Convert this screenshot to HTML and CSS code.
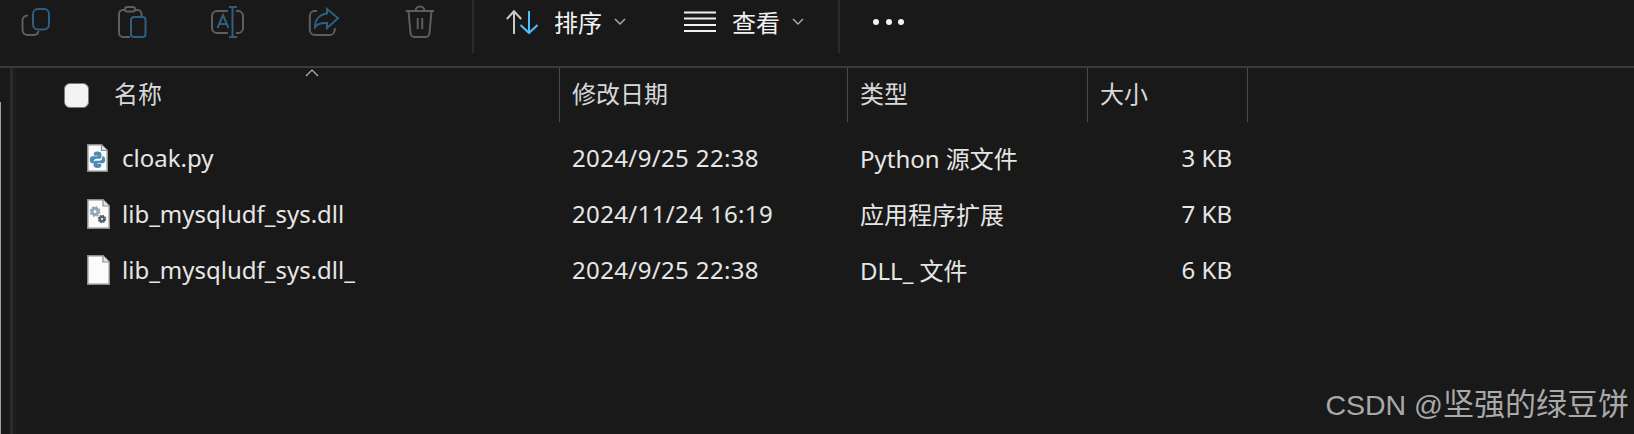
FILE: index.html
```html
<!DOCTYPE html>
<html lang="zh-CN">
<head>
    <meta charset="UTF-8">
    <title>文件资源管理器</title>
    <link rel="stylesheet" href="styles.css">
</head>
<body>
    <div class="toolbar">
        <div class="tool-group">
            <svg class="tool-icon" viewBox="0 0 36 40">
                <path class="dim" d="M10 13.5 H9.5 A5 5 0 0 0 4.5 18.5 V28 A5 5 0 0 0 9.5 33 H16 A5 5 0 0 0 20.5 29"/>
                <rect class="blue" x="15" y="7" width="16" height="20.5" rx="5"/>
            </svg>
            <svg class="tool-icon" viewBox="0 0 36 40">
                <path class="dim" d="M11 8 H9 A4 4 0 0 0 5 12 V31 A4 4 0 0 0 9 35 H16 M21 8 H23.5 A4 4 0 0 1 27.5 12 V14"/>
                <rect class="dim" x="11" y="5" width="10" height="4.5" rx="2.2"/>
                <rect class="blue" x="17" y="15" width="14.5" height="20" rx="3"/>
            </svg>
            <svg class="tool-icon" viewBox="0 0 36 40">
                <path class="dim" d="M18 9 H7 A5 5 0 0 0 2 14 V26 A5 5 0 0 0 7 31 H18 M26 9 H28 A5 5 0 0 1 33 14 V26 A5 5 0 0 1 28 31 H26"/>
                <path class="blue" d="M22.5 5 V35 M19 5 H27 M19 35 H27 M7.5 26 L13 13 L18.5 26 M9.5 22 H16.5"/>
            </svg>
            <svg class="tool-icon" viewBox="0 0 36 40">
                <path class="dim" d="M11 9 H8.5 A5 5 0 0 0 3.8 14 V28 A5 5 0 0 0 8.5 33 H24 A5 5 0 0 0 28.7 28 V26"/>
                <path class="blue" d="M21 7 L32 16.3 L21 26 V21 C15 20.5 11.5 22 9 25 C9 17 14 12.5 21 11.5 Z"/>
            </svg>
            <svg class="tool-icon" viewBox="0 0 36 40">
                <path class="dim" d="M3.7 9 H32 M6.5 9 L8.5 31 A4 4 0 0 0 12.5 35 H23.5 A4 4 0 0 0 27.5 31 L29.5 9 M13.5 9 A4.5 4.5 0 0 1 22.5 9 M15.7 16 V27 M20.2 16 V27"/>
            </svg>
        </div>
        <div class="tool-sep"></div>
        <div class="menu-btn sort-btn">
            <svg class="menu-icon" viewBox="0 0 32 24">
                <path class="up" d="M8 24 V1 M0.8 9 L8 1.2 L15.2 9"/>
                <path class="down" d="M23 1 V23 M14.5 15 L23 23 L31.5 15"/>
            </svg>
            <span class="menu-label">排序</span>
            <svg class="chevron" viewBox="0 0 12 8"><path d="M1 1 L6 6 L11 1"/></svg>
        </div>
        <div class="menu-btn view-btn">
            <svg class="menu-icon" viewBox="0 0 32 24">
                <path class="lines" d="M0 2.5 H32 M0 8.5 H32 M0 15 H32 M0 21 H32"/>
            </svg>
            <span class="menu-label">查看</span>
            <svg class="chevron" viewBox="0 0 12 8"><path d="M1 1 L6 6 L11 1"/></svg>
        </div>
        <div class="tool-sep sep-right"></div>
        <div class="more"><i></i><i></i><i></i></div>
    </div>

    <div class="main">
        <div class="side-edge"></div>
        <div class="pane-sliver"></div>
        <svg class="sort-arrow" viewBox="0 0 14 8"><path d="M1 7 L7 1 L13 7"/></svg>

        <div class="columns head">
            <div class="cell name-head"><span class="checkbox"></span><span class="head-label">名称</span></div>
            <div class="cell"><span class="head-label">修改日期</span></div>
            <div class="cell"><span class="head-label">类型</span></div>
            <div class="cell"><span class="head-label">大小</span></div>
        </div>

        <div class="columns row">
            <div class="cell file-name">
                <span class="icon-slot">
                    <svg class="file-icon narrow" viewBox="0 0 21 28">
                        <path class="paper" d="M.75 .75 H14.5 L20.25 6.5 V27.25 H.75 Z"/>
                        <path class="fold" d="M14.5 .75 V6.5 H20.25"/>
                        <path class="py" d="M10.2 7.5 C7.5 7.5 6.8 8.6 6.8 10 V11.5 H10.6 V12.3 H5.5 C3.7 12.3 2.8 13.7 2.8 15.8 C2.8 17.9 3.7 19.3 5.3 19.3 H6.8 V17.3 C6.8 15.8 8 14.8 9.4 14.8 H12.3 C13.6 14.8 14.4 13.9 14.4 12.7 V10 C14.4 8.6 13.2 7.5 10.2 7.5 Z"/>
                        <path class="py" d="M10.8 24 C13.5 24 14.2 22.9 14.2 21.5 V20 H10.4 V19.2 H15.5 C17.3 19.2 18.2 17.8 18.2 15.7 C18.2 13.6 17.3 12.2 15.7 12.2 H15.2 V14.2 C15.2 15.7 14 16.7 12.6 16.7 H8.7 C7.4 16.7 6.6 17.6 6.6 18.8 V21.5 C6.6 22.9 7.8 24 10.8 24 Z"/>
                    </svg>
                </span>
                cloak.py
            </div>
            <div class="cell date">2024/9/25 22:38</div>
            <div class="cell">Python 源文件</div>
            <div class="cell size">3 KB</div>
        </div>

        <div class="columns row">
            <div class="cell file-name">
                <span class="icon-slot">
                    <svg class="file-icon" viewBox="0 0 23 30">
                        <path class="paper" d="M.75 .75 H16 L22.25 7 V29.25 H.75 Z"/>
                        <path class="fold" d="M16 .75 V7 H22.25"/>
                        <circle class="gear-big" cx="8" cy="12.5" r="3"/>
                        <circle class="gear-big-teeth" cx="8" cy="12.5" r="4.6"/>
                        <circle class="gear-small" cx="15" cy="20" r="2.3"/>
                        <circle class="gear-small-teeth" cx="15" cy="20" r="3.6"/>
                    </svg>
                </span>
                lib_mysqludf_sys.dll
            </div>
            <div class="cell date">2024/11/24 16:19</div>
            <div class="cell">应用程序扩展</div>
            <div class="cell size">7 KB</div>
        </div>

        <div class="columns row">
            <div class="cell file-name">
                <span class="icon-slot">
                    <svg class="file-icon" viewBox="0 0 23 30">
                        <path class="paper" d="M.75 .75 H16 L22.25 7 V29.25 H.75 Z"/>
                        <path class="fold" d="M16 .75 V7 H22.25"/>
                    </svg>
                </span>
                lib_mysqludf_sys.dll_
            </div>
            <div class="cell date">2024/9/25 22:38</div>
            <div class="cell">DLL_ 文件</div>
            <div class="cell size">6 KB</div>
        </div>
    </div>

    <div class="watermark"><span class="mark-latin">CSDN @</span>坚强的绿豆饼</div>
</body>
</html>
```

FILE: styles.css
```css
* {
    margin: 0;
    padding: 0;
    box-sizing: border-box;
}

html, body {
    height: 100%;
    overflow: hidden;
}

body {
    position: relative;
    background: #191919;
    color: #e6e6e6;
    font-family: 'Noto Sans', 'Noto Sans CJK SC', sans-serif;
    font-size: 24px;
}

/* toolbar */
.toolbar {
    display: flex;
    height: 68px;
    border-bottom: 2px solid #3a3a3a;
}

.tool-group {
    display: flex;
    gap: 60px;
    width: 472px;
    padding: 2px 0 0 18px;
}

.tool-icon {
    width: 36px;
    height: 40px;
    fill: none;
    stroke-width: 2;
}

.dim { fill: none; stroke: #5e5e5e; }
.blue { fill: none; stroke: #2e5f7f; }

.tool-sep {
    width: 2px;
    height: 53px;
    background: #2c2c2c;
}

.menu-btn {
    display: flex;
    align-items: center;
    height: 44px;
    color: #f2f2f2;
}

.menu-label {
    margin-bottom: 2px;
}

.sort-btn { margin-left: 32px; }
.view-btn { margin-left: 58px; }

.menu-icon {
    width: 32px;
    height: 24px;
    margin-right: 16px;
    fill: none;
    stroke-width: 2;
}

.up { stroke: #c9c9c9; }
.down { stroke: #4cc2ff; }
.lines { stroke: #f0f0f0; }

.chevron {
    width: 12px;
    height: 8px;
    margin-left: 12px;
    fill: none;
    stroke: #a8a8a8;
    stroke-width: 1.5;
}

.sep-right { margin-left: 34px; }

.more {
    display: flex;
    align-items: center;
    gap: 6.5px;
    height: 44px;
    margin-left: 33px;
}

.more i {
    width: 6px;
    height: 6px;
    border-radius: 50%;
    background: #f2f2f2;
}

/* file list */
.main {
    position: relative;
    height: calc(100% - 68px);
}

.side-edge {
    position: absolute;
    left: 10px;
    top: 0;
    bottom: 0;
    width: 6px;
    background: linear-gradient(90deg, #2a2a2a 50%, #1e1e1e 50%);
}

.pane-sliver {
    position: absolute;
    left: 0;
    top: 34px;
    bottom: 0;
    width: 1px;
    background: #a0a0a0;
}

.sort-arrow {
    position: absolute;
    left: 305px;
    top: 1px;
    width: 14px;
    height: 8px;
    fill: none;
    stroke: #b5b5b5;
    stroke-width: 1.2;
}

.columns {
    display: grid;
    grid-template-columns: 560px 288px 240px 160px;
    align-items: center;
}

.head {
    height: 54px;
    margin-bottom: 8px;
    color: #d8d8d8;
}

.head .cell {
    display: flex;
    align-items: center;
    height: 100%;
    border-right: 1px solid #4a4a4a;
}

.head-label {
    margin-bottom: 5px;
}

.cell {
    padding-left: 12px;
    white-space: nowrap;
}

.head .name-head {
    padding-left: 64px;
}

.checkbox {
    width: 25px;
    height: 25px;
    margin-right: 25px;
    border: 1px solid #7a7a7a;
    border-radius: 6px;
    background: #f3f3f3;
}

.row {
    height: 56px;
    padding-bottom: 2px;
}

.file-name {
    display: flex;
    align-items: center;
    padding-left: 87px;
}

.icon-slot {
    display: flex;
    width: 35px;
    margin-top: 2px;
}

.file-icon {
    width: 23px;
    height: 30px;
}

.file-icon.narrow {
    width: 21px;
    height: 28px;
}

.paper { fill: #fbfbfb; stroke: #8c8c8c; stroke-width: 1.5; }
.fold { fill: #e4e4e4; stroke: #8c8c8c; stroke-width: 1.2; }
.py { fill: #4a8db0; }
.gear-big { fill: none; stroke: #93a7b5; stroke-width: 3; }
.gear-big-teeth { fill: none; stroke: #93a7b5; stroke-width: 1.6; stroke-dasharray: 2 1.6; }
.gear-small { fill: none; stroke: #55626c; stroke-width: 2.4; }
.gear-small-teeth { fill: none; stroke: #55626c; stroke-width: 1.2; stroke-dasharray: 1.5 1.33; }

.date {
    letter-spacing: .36px;
}

.size {
    padding-right: 16px;
    text-align: right;
}

.watermark {
    position: absolute;
    right: 5px;
    bottom: 10px;
    color: #a9a9a9;
    font-family: 'Liberation Sans', 'Noto Sans CJK SC', sans-serif;
    font-size: 31px;
}

.mark-latin {
    font-size: 28.5px;
}
```
